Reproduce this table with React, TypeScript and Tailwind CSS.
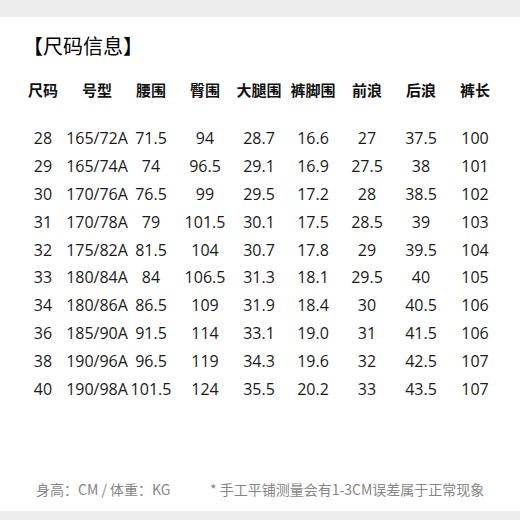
const headers = ["尺码", "号型", "腰围", "臀围", "大腿围", "裤脚围", "前浪", "后浪", "裤长"];

const rows: string[][] = [
  ["28", "165/72A", "71.5", "94", "28.7", "16.6", "27", "37.5", "100"],
  ["29", "165/74A", "74", "96.5", "29.1", "16.9", "27.5", "38", "101"],
  ["30", "170/76A", "76.5", "99", "29.5", "17.2", "28", "38.5", "102"],
  ["31", "170/78A", "79", "101.5", "30.1", "17.5", "28.5", "39", "103"],
  ["32", "175/82A", "81.5", "104", "30.7", "17.8", "29", "39.5", "104"],
  ["33", "180/84A", "84", "106.5", "31.3", "18.1", "29.5", "40", "105"],
  ["34", "180/86A", "86.5", "109", "31.9", "18.4", "30", "40.5", "106"],
  ["36", "185/90A", "91.5", "114", "33.1", "19.0", "31", "41.5", "106"],
  ["38", "190/96A", "96.5", "119", "34.3", "19.6", "32", "42.5", "107"],
  ["40", "190/98A", "101.5", "124", "35.5", "20.2", "33", "43.5", "107"],
];

export default function App() {
  return (
    <div className="flex h-[520px] w-[520px] flex-col bg-white font-['Noto_Sans_CJK_SC',sans-serif] text-[#111]">
      <div className="h-[17px] bg-[#ededed]" />

      <h1 className="mt-[15px] pl-[23px] text-[20px] leading-[28px] font-normal text-black">
        【尺码信息】
      </h1>

      <div className="mt-[16px] grid grid-cols-[repeat(9,54px)] pl-[16px]">
        {headers.map((h) => (
          <div
            key={h}
            className="flex h-[28px] items-center justify-center whitespace-nowrap text-[15px] font-bold"
          >
            {h}
          </div>
        ))}
      </div>

      <div className="mt-[20px] flex flex-col pl-[16px] font-['Open_Sans','Noto_Sans_CJK_SC',sans-serif] text-[16px] text-[#1a1a1a]">
        {rows.map((row) => (
          <div key={row[0]} className="grid h-[27.9px] grid-cols-[repeat(9,54px)]">
            {row.map((cell, i) => (
              <div key={i} className="flex items-center justify-center whitespace-nowrap">
                {cell}
              </div>
            ))}
          </div>
        ))}
      </div>

      <div className="flex-1" />

      <div className="flex h-[20px] items-center pl-[36px] text-[14px] text-[#858585]">
        <span className="w-[174px] whitespace-nowrap">身高：CM / 体重：KG</span>
        <span className="whitespace-nowrap">* 手工平铺测量会有1-3CM误差属于正常现象</span>
      </div>

      <div className="mt-[12px] h-[9px] bg-[#ededed]" />
    </div>
  );
}
